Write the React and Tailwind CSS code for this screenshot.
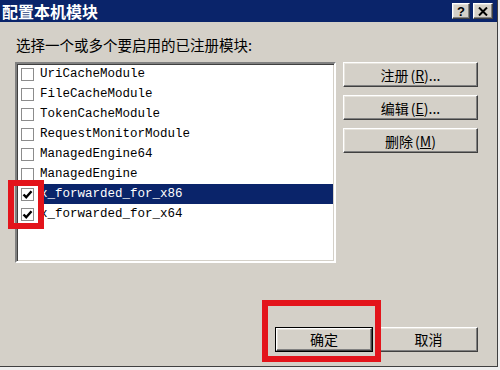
import React from 'react';

const modules = [
  { name: 'UriCacheModule', checked: false },
  { name: 'FileCacheModule', checked: false },
  { name: 'TokenCacheModule', checked: false },
  { name: 'RequestMonitorModule', checked: false },
  { name: 'ManagedEngine64', checked: false },
  { name: 'ManagedEngine', checked: false },
  { name: 'x_forwarded_for_x86', checked: true, selected: true },
  { name: 'x_forwarded_for_x64', checked: true },
];

const cjk = "font-['Noto_Sans_CJK_SC','Noto_Sans',sans-serif]";
const raised =
  'border border-t-white border-l-white border-r-[#404040] border-b-[#404040] shadow-[inset_-1px_-1px_0_#808080,inset_1px_1px_0_#e6e3dc]';

function CheckBox({ checked }) {
  return (
    <span className="w-[13px] h-[13px] shrink-0 bg-white border border-[#8c8c8c] flex items-center justify-center">
      {checked && (
        <svg width="11" height="11" viewBox="0 0 11 11">
          <path d="M1.5 5.5 L4.2 8.2 L9.5 2.2" fill="none" stroke="#000" strokeWidth="2.4" />
        </svg>
      )}
    </span>
  );
}

function SideButton({ label, hot, dots }) {
  return (
    <button className={`h-[25px] w-full bg-[#d4d0c8] ${raised} ${cjk} text-[14px] text-black flex items-center justify-center leading-none`}>
      {label}
      <span className="ml-[2px]">(<u>{hot}</u>){dots ? '...' : ''}</span>
    </button>
  );
}

export default function App() {
  return (
    <div className="w-[500px] h-[370px] bg-[#eeeeee] overflow-hidden">
      <div className="relative w-[498px] h-[367px] bg-[#d4d0c8] border-r border-b border-[#404040] flex flex-col">
        {/* title bar */}
        <div className="h-[22px] bg-[#0a246a] flex items-center pl-[2px] pr-[4px]">
          <span className={`${cjk} text-white font-bold text-[16px] leading-none`}>配置本机模块</span>
          <div className="ml-auto flex gap-[3px]">
            <span className={`w-[18px] h-[16px] bg-[#d4d0c8] ${raised} flex items-center justify-center font-['Liberation_Sans',sans-serif] font-bold text-[13px] leading-none text-black`}>?</span>
            <span className={`w-[20px] h-[16px] bg-[#d4d0c8] ${raised} flex items-center justify-center`}>
              <svg width="10" height="9" viewBox="0 0 10 9">
                <path d="M1 0.5 L9 8.5 M9 0.5 L1 8.5" stroke="#000" strokeWidth="2" />
              </svg>
            </span>
          </div>
        </div>

        {/* body */}
        <div className="flex flex-col px-[15px] pt-[13px]">
          <div className={`${cjk} text-[14.5px] leading-[20px] text-black pl-[1px]`}>选择一个或多个要启用的已注册模块:</div>

          <div className="flex mt-[7px]">
            <div className="w-[321px] h-[201px] bg-white border-2 border-t-[#808080] border-l-[#808080] border-r-white border-b-white shadow-[inset_1px_1px_0_#404040,inset_-1px_-1px_0_#d4d0c8] p-[1px] pt-[0px]">
              {modules.map((m) => (
                <div key={m.name} className="h-[20px] flex items-center pl-[3px]">
                  <CheckBox checked={m.checked} />
                  <span
                    className={`ml-[4px] h-full flex items-center flex-1 pl-[2px] font-['Liberation_Mono',monospace] text-[12.5px] ${
                      m.selected ? 'bg-[#0a246a] text-white' : 'text-black'
                    }`}
                  >
                    {m.name}
                  </span>
                </div>
              ))}
            </div>

            <div className="ml-[7px] w-[135px] flex flex-col gap-[8px]">
              <SideButton label="注册" hot="R" dots />
              <SideButton label="编辑" hot="E" dots />
              <SideButton label="删除" hot="M" />
            </div>
          </div>

          <div className="flex justify-end gap-[6px] mt-[64px] pr-[4px]">
            <button className={`w-[98px] h-[25px] bg-[#d4d0c8] border border-black ${cjk} text-[14px] text-black`}>
              <span className={`w-full h-full flex items-center justify-center ${raised}`}>确定</span>
            </button>
            <button className={`w-[99px] h-[25px] bg-[#d4d0c8] ${raised} ${cjk} text-[14px] text-black flex items-center justify-center`}>
              取消
            </button>
          </div>
        </div>

        {/* red highlight annotations */}
        <div className="absolute left-[8px] top-[180px] w-[36px] h-[49px] border-[6px] border-[#e3141b]" />
        <div className="absolute left-[262px] top-[300px] w-[119px] h-[62px] border-[6px] border-[#e3141b]" />
      </div>
    </div>
  );
}
